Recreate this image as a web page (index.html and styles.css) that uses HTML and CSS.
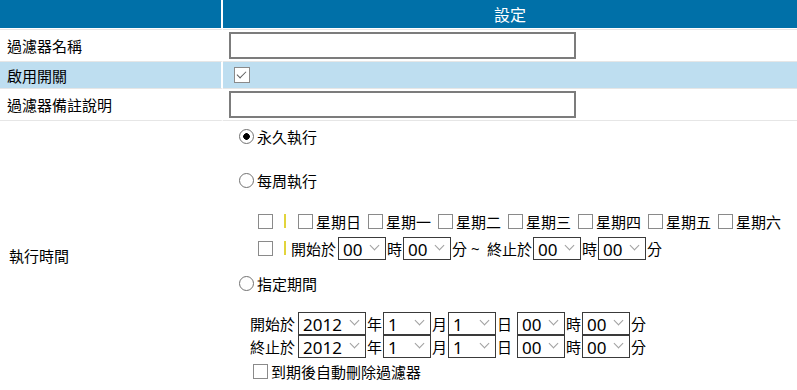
FILE: index.html
```html
<!DOCTYPE html>
<html lang="zh-Hant">
<head>
    <meta charset="UTF-8">
    <title>過濾器設定</title>
    <link rel="stylesheet" href="styles.css">
</head>
<body>
    <table class="settings">
        <thead>
            <tr>
                <th class="label-col"></th>
                <th>設定</th>
            </tr>
        </thead>
        <tbody>
            <tr class="row-input">
                <td class="label">過濾器名稱</td>
                <td class="value"><input type="text" class="text-input"></td>
            </tr>
            <tr class="row-check alt">
                <td class="label">啟用開關</td>
                <td class="value"><input type="checkbox" class="cb cb-enable" checked></td>
            </tr>
            <tr class="row-input">
                <td class="label">過濾器備註說明</td>
                <td class="value"><input type="text" class="text-input"></td>
            </tr>
            <tr class="row-schedule">
                <td class="label label-time">執行時間</td>
                <td class="value schedule">
                    <!-- run mode -->
                    <label class="opt opt-forever"><input type="radio" name="mode" class="rd" checked>永久執行</label>
                    <label class="opt opt-weekly"><input type="radio" name="mode" class="rd">每周執行</label>

                    <div class="line days">
                        <input type="checkbox" class="cb">
                        <span class="mark"></span>
                        <label class="day"><input type="checkbox" class="cb">星期日</label>
                        <label class="day"><input type="checkbox" class="cb">星期一</label>
                        <label class="day"><input type="checkbox" class="cb">星期二</label>
                        <label class="day"><input type="checkbox" class="cb">星期三</label>
                        <label class="day"><input type="checkbox" class="cb">星期四</label>
                        <label class="day"><input type="checkbox" class="cb">星期五</label>
                        <label class="day"><input type="checkbox" class="cb">星期六</label>
                    </div>
                    <div class="line hours">
                        <input type="checkbox" class="cb">
                        <span class="mark mark-tight"></span>
                        開始於<span class="sel sel-first"><select><option>00</option></select></span>時<span class="sel"><select><option>00</option></select></span>分<span class="tilde">~</span>終止於<span class="sel"><select><option>00</option></select></span>時<span class="sel"><select><option>00</option></select></span>分
                    </div>

                    <label class="opt opt-period"><input type="radio" name="mode" class="rd">指定期間</label>

                    <div class="line date date-start">
                        開始於<span class="sel sel-year"><select><option>2012</option></select></span>年<span class="sel"><select><option>1</option></select></span>月<span class="sel"><select><option>1</option></select></span>日<span class="sel sel-gap"><select><option>00</option></select></span>時<span class="sel"><select><option>00</option></select></span>分
                    </div>
                    <div class="line date">
                        終止於<span class="sel sel-year"><select><option>2012</option></select></span>年<span class="sel"><select><option>1</option></select></span>月<span class="sel"><select><option>1</option></select></span>日<span class="sel sel-gap"><select><option>00</option></select></span>時<span class="sel"><select><option>00</option></select></span>分
                    </div>
                    <label class="line expire"><input type="checkbox" class="cb">到期後自動刪除過濾器</label>
                </td>
            </tr>
        </tbody>
    </table>
</body>
</html>
```

FILE: styles.css
```css
/* Basic styling */
body {
    margin: 0;
    font-family: "Noto Sans CJK TC", "Noto Sans", sans-serif;
    font-size: 15px;
    color: #000;
    background: #fff;
}
.settings {
    width: 100%;
    border-collapse: separate;
    border-spacing: 0;
    table-layout: fixed;
}
.settings th,
.settings td {
    box-sizing: border-box;
    padding: 0;
}
.settings th {
    height: 29px;
    background-color: #0070a8;
    color: #fff;
    font-weight: normal;
    font-size: 16px;
    text-align: center;
    border-bottom: 1px solid #fff;
}
.settings th.label-col {
    width: 223px;
    border-right: 2px solid #fff;
}
.settings td {
    border-top: 1px solid #e6e6e6;
    vertical-align: middle;
}
.settings td.label {
    border-right: 2px solid #fff;
    padding-left: 7px;
    white-space: nowrap;
}
.settings td.value {
    padding-left: 6px;
}
.settings td.label-time {
    padding-left: 9px;
}
.row-input td {
    height: 32px;
}
.row-check td {
    height: 27px;
}
.row-schedule td {
    height: 270px;
}
.alt td {
    background-color: #bedef0;
}

/* Text inputs */
.text-input {
    box-sizing: border-box;
    display: block;
    width: 347px;
    height: 27px;
    margin: 0;
    border: 2px solid #7c7c7c;
    background: #fff;
    outline: none;
}

/* Checkboxes and radios */
.cb {
    appearance: none;
    -webkit-appearance: none;
    box-sizing: border-box;
    position: relative;
    flex: none;
    width: 15px;
    height: 15px;
    margin: 0;
    border: 1px solid #8a8a8a;
    background: #fff;
}
.cb:checked::after {
    content: "";
    position: absolute;
    left: 4px;
    top: 1px;
    width: 4px;
    height: 8px;
    border-right: 1px solid #5e5e5e;
    border-bottom: 1px solid #5e5e5e;
    transform: rotate(45deg);
}
.cb-enable {
    display: block;
    width: 16px;
    height: 16px;
    margin-left: 5px;
}
.rd {
    appearance: none;
    -webkit-appearance: none;
    box-sizing: border-box;
    flex: none;
    width: 15px;
    height: 15px;
    margin: 0 3px 0 0;
    border: 1px solid #727272;
    border-radius: 50%;
    background: #fff;
}
.rd:checked {
    background: radial-gradient(circle, #000 0, #000 3px, #fff 3.6px);
}

/* Schedule cell */
.settings td.schedule {
    vertical-align: top;
    padding-top: 5px;
}
.opt,
.line {
    display: flex;
    align-items: center;
    white-space: nowrap;
}
.opt {
    height: 20px;
    margin-left: 10px;
}
.opt-weekly {
    margin-top: 24px;
}
.opt-period {
    margin-top: 13px;
}
.days {
    height: 24px;
    margin-top: 19px;
    margin-left: 29px;
}
.hours {
    height: 24px;
    margin-top: 3px;
    margin-left: 29px;
}
.mark {
    flex: none;
    width: 2px;
    height: 14px;
    margin: 0 12px 0 11px;
    background-color: #e2d43c;
}
.mark-tight {
    margin-right: 5px;
}
.tilde {
    display: inline-block;
    box-sizing: border-box;
    width: 20px;
    padding-left: 4px;
    font-family: "Noto Sans", sans-serif;
}
.day {
    display: flex;
    align-items: center;
    margin-right: 7px;
}
.day .cb {
    margin-right: 3px;
}
.date {
    height: 23px;
    margin-left: 21px;
}
.date-start {
    margin-top: 19px;
}
.expire {
    height: 20px;
    margin-top: 3px;
    margin-left: 24px;
}
.expire .cb {
    margin-right: 3px;
}

/* Select boxes */
.sel {
    position: relative;
    display: inline-block;
    margin: 0 1px;
}
.sel select {
    appearance: none;
    -webkit-appearance: none;
    box-sizing: border-box;
    display: block;
    width: 48px;
    height: 23px;
    margin: 0;
    padding: 0 0 0 4px;
    border: 1px solid #3a3a3a;
    border-radius: 0;
    background: #fff;
    color: #000;
    font-family: "Noto Sans", sans-serif;
    font-size: 17px;
    outline: none;
}
.sel::after {
    content: "";
    position: absolute;
    right: 8px;
    top: 5px;
    width: 6px;
    height: 6px;
    border-right: 1px solid #a0a0a0;
    border-bottom: 1px solid #a0a0a0;
    transform: rotate(45deg);
    pointer-events: none;
}
.sel-year select {
    width: 68px;
}
.sel-year {
    margin-left: 3px;
}
.sel-first {
    margin-left: 2px;
}
.sel-gap {
    margin-left: 5px;
}
```
